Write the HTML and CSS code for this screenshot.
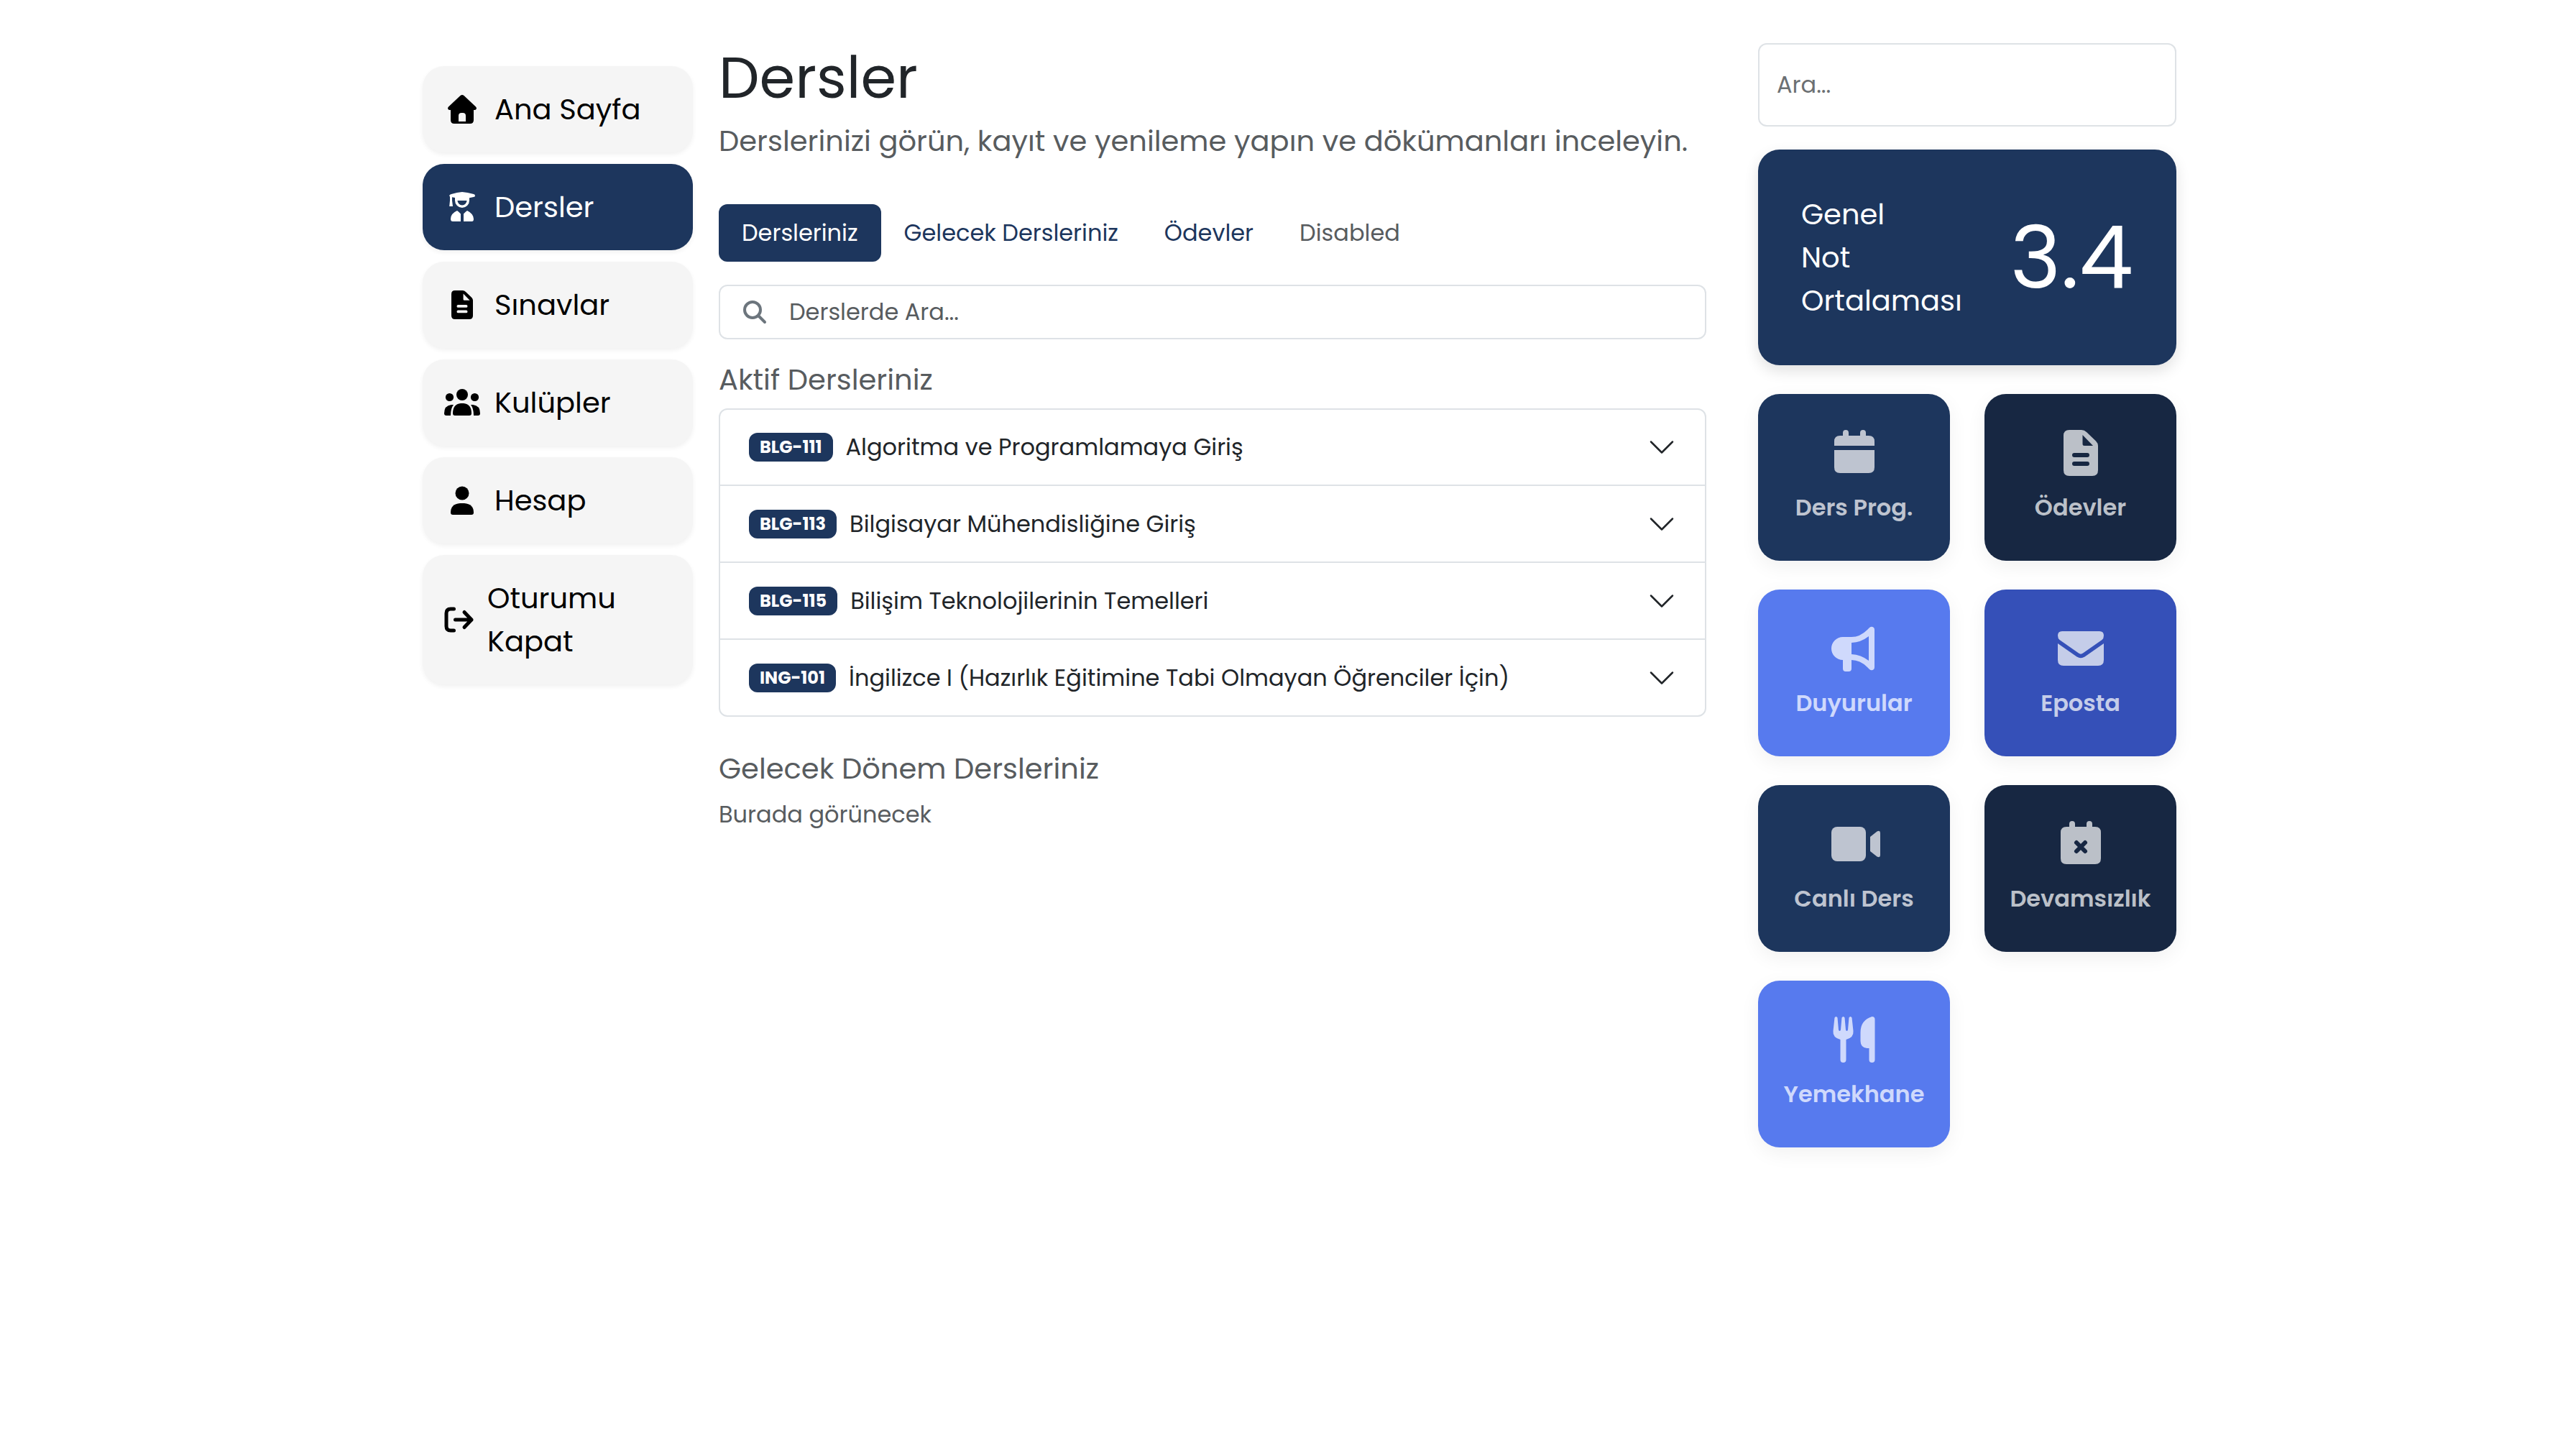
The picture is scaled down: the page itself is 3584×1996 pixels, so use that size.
FILE: index.html
```html
<!DOCTYPE html>
<html lang="tr">
<head>
<meta charset="utf-8">
<meta name="viewport" content="width=device-width, initial-scale=1">
<title>Dersler</title>
<link rel="stylesheet" href="styles.css">
</head>
<body>
<svg class="sprite" aria-hidden="true">
  <symbol id="i-file" viewBox="0 0 64 64"><path fill-rule="evenodd" d="M16 0H33Q37 0 40 3L53 15.500Q56 18.500 56 22V56Q56 64 48 64H16Q8 64 8 56V8Q8 0 16 0ZM34.500 7V19.500Q34.500 22 37 22H49ZM23 32a3 3 0 0 0 0 6H41a3 3 0 0 0 0-6ZM23 44a3 3 0 0 0 0 6H41a3 3 0 0 0 0-6Z"/></symbol>
</svg>
<div class="shell">
  <nav class="menu" aria-label="Menü">
    <a class="menu-item" href="#"><svg class="menu-icon" viewBox="-5 0 50 40"><path fill-rule="evenodd" d="M17.500 1Q20 -1 22.500 1L39 16.500Q40.500 18 39.800 19.500Q39 21 37 21H36V35Q36 40 31 40H9Q4 40 4 35V21H3Q1 21 .2 19.500Q-.5 18 1 16.500ZM15 37H25V29Q25 25 21 25H19Q15 25 15 29Z"/></svg><span>Ana Sayfa</span></a>
    <a class="menu-item active" href="#" aria-current="page"><svg class="menu-icon" viewBox="-5 0 50 40"><path fill-rule="evenodd" d="M20-1Q27-.5 36 2Q38 2.600 38 4.200Q38 5.700 36 6L30 7.200V11A10 10 0 0 1 10 11V7L6 6.300V11L7 19H2.200L3 11V5.500Q2 5 2.300 3.800Q2.600 2.600 5 2Q13-.5 20-1ZM13.500 11A6.500 6.500 0 0 0 26.500 11Z"/><path d="M13 25Q15 26 18 29.500V40H7Q4 40 4 36.500Q4 29 13 25ZM27 25Q25 26 22 29.500V40H33.500Q36 40 36 36.500Q35.500 29 27 25Z"/></svg><span>Dersler</span></a>
    <a class="menu-item" href="#"><svg class="menu-icon"><use href="#i-file"/></svg><span>Sınavlar</span></a>
    <a class="menu-item" href="#"><svg class="menu-icon" viewBox="0 0 50 40"><circle cx="25" cy="9" r="8"/><circle cx="7.500" cy="12.500" r="5.600"/><circle cx="42.500" cy="12.500" r="5.600"/><path d="M23 21H27Q38 22 38 35Q38 38 35 38H15Q12 38 12 35Q12 22 23 21ZM10 23H13Q9 28 9 38H3Q0 38 0 35Q0 24 10 23ZM40 23H37Q41 28 41 38H47Q50 38 50 35Q50 24 40 23Z"/></svg><span>Kulüpler</span></a>
    <a class="menu-item" href="#"><svg class="menu-icon" viewBox="-5 0 50 40"><circle cx="20" cy="10" r="9.500"/><path d="M17 24H23Q36 25 36 37Q36 40 33 40H7Q4 40 4 37Q4 25 17 24Z"/></svg><span>Hesap</span></a>
    <a class="menu-item" href="#"><svg class="menu-icon square" viewBox="0 0 40 40"><path class="line" d="M13.500 5H9Q3 5 3 11V29Q3 35 9 35H13.500M15.500 20H38M28 9.500L38 20L28 30.500"/></svg><span>Oturumu Kapat</span></a>
  </nav>

  <main class="content">
    <h1>Dersler</h1>
    <p class="lead">Derslerinizi görün, kayıt ve yenileme yapın ve dökümanları inceleyin.</p>
    <div class="tabs">
      <button class="tab active" type="button">Dersleriniz</button>
      <button class="tab" type="button">Gelecek Dersleriniz</button>
      <button class="tab" type="button">Ödevler</button>
      <button class="tab" type="button" disabled>Disabled</button>
    </div>
    <label class="search">
      <svg class="search-icon" viewBox="0 0 32 32"><path class="line" d="M24 13A11 11 0 1 1 2 13A11 11 0 1 1 24 13ZM21 21L30 30"/></svg>
      <input type="text" placeholder="Derslerde Ara..." aria-label="Derslerde Ara">
    </label>
    <h2>Aktif Dersleriniz</h2>
    <div class="accordion">
      <button class="course" type="button"><span class="badge">BLG-111</span><span class="name">Algoritma ve Programlamaya Giriş</span><svg class="chevron" viewBox="0 0 16 16"><path d="M2 5l6 6 6-6"/></svg></button>
      <button class="course" type="button"><span class="badge">BLG-113</span><span class="name">Bilgisayar Mühendisliğine Giriş</span><svg class="chevron" viewBox="0 0 16 16"><path d="M2 5l6 6 6-6"/></svg></button>
      <button class="course" type="button"><span class="badge">BLG-115</span><span class="name">Bilişim Teknolojilerinin Temelleri</span><svg class="chevron" viewBox="0 0 16 16"><path d="M2 5l6 6 6-6"/></svg></button>
      <button class="course" type="button"><span class="badge">ING-101</span><span class="name">İngilizce I (Hazırlık Eğitimine Tabi Olmayan Öğrenciler İçin)</span><svg class="chevron" viewBox="0 0 16 16"><path d="M2 5l6 6 6-6"/></svg></button>
    </div>
    <h2 class="next">Gelecek Dönem Dersleriniz</h2>
    <p class="note">Burada görünecek</p>
  </main>

  <aside class="side">
    <input class="side-search" type="text" placeholder="Ara..." aria-label="Ara">
    <section class="gpa"><span class="gpa-label">Genel<br>Not<br>Ortalaması</span><strong class="gpa-value">3.4</strong></section>
    <div class="tiles">
      <a class="tile navy" href="#"><svg class="tile-icon" viewBox="0 0 64 64"><path d="M20 0a4 4 0 0 1 4 4V8H40V4a4 4 0 0 1 8 0V8H52Q60 8 60 16V22H4V16Q4 8 12 8H16V4a4 4 0 0 1 4-4ZM4 28H60V52Q60 60 52 60H12Q4 60 4 52Z"/></svg><span>Ders Prog.</span></a>
      <a class="tile dark" href="#"><svg class="tile-icon"><use href="#i-file"/></svg><span>Ödevler</span></a>
      <a class="tile sky" href="#"><svg class="tile-icon" viewBox="0 0 64 64"><path fill-rule="evenodd" d="M16 16H28Q40 16 50 6L53 3Q56 .5 59 3Q60 4 60 6V58Q60 60 59 61Q56 63.500 53 61L50 58Q40 48 28 48V60Q28 64 24 64H20Q16 64 16 60V48A16 16 0 0 1 16 16ZM28 24V40Q41 40.500 52 49V15Q41 23.500 28 24Z"/></svg><span>Duyurular</span></a>
      <a class="tile royal" href="#"><svg class="tile-icon" viewBox="0 0 64 64"><path d="M6 8H58Q64 8 64 14Q64 18 61.500 20L35 38.500Q32 40.800 29 38.500L2.500 20Q0 18 0 14Q0 8 6 8ZM0 25L26.500 43.500Q32 47 37.500 43.500L64 25V48Q64 56 56 56H8Q0 56 0 48Z"/></svg><span>Eposta</span></a>
      <a class="tile navy" href="#"><svg class="tile-icon" viewBox="0 0 64 64"><rect y="8" width="48" height="48" rx="8"/><path d="M54 22L63.500 14.500Q68 12.500 68 16.500V47.500Q68 51.500 63.500 49.500L54 42Z"/></svg><span>Canlı Ders</span></a>
      <a class="tile dark" href="#"><svg class="tile-icon" viewBox="0 0 64 64"><path d="M20 0a4 4 0 0 1 4 4V8H40V4a4 4 0 0 1 8 0V8H52Q60 8 60 16V52Q60 60 52 60H12Q4 60 4 52V16Q4 8 12 8H16V4a4 4 0 0 1 4-4Z"/><path class="cross" d="M26 30L38 42M38 30L26 42"/></svg><span>Devamsızlık</span></a>
      <a class="tile sky" href="#"><svg class="tile-icon" viewBox="0 0 64 64"><path d="M4.500 1.500Q6.500-1.500 8.500 1.500L10 18.500Q11.500 21.500 13 18.500L14.500 1.500Q16.500-1.500 18.500 1.500L20 18.500Q21.500 21.500 23 18.500L24.500 1.500Q26.500-1.500 28.500 1.500L30.500 20Q31.500 29 20.500 32V60Q20.500 64 16.500 64Q12.500 64 12.500 60V32Q1.500 29 2.500 20ZM56.500 0Q60.500 0 60.500 4V60Q60.500 64 56.500 64Q52.500 64 52.500 60V44H49.500Q40.500 43 40.500 34V22Q40.500 5 56.500 0Z"/></svg><span>Yemekhane</span></a>
    </div>
  </aside>
</div>
</body>
</html>
```
FILE: styles.css
```css
* { box-sizing: border-box; }

body {
  margin: 0;
  background: #fff;
  color: #212529;
  font-family: Poppins, Inter, "Open Sans", sans-serif;
  font-size: 32px;
  line-height: 48px;
}

button, input { font: inherit; color: inherit; }
a { text-decoration: none; }
svg { fill: currentColor; flex: none; overflow: visible; }
.sprite { position: absolute; width: 0; height: 0; }
.line { fill: none; stroke: currentColor; stroke-width: 5; stroke-linecap: round; stroke-linejoin: round; }

.shell {
  display: grid;
  grid-template-columns: 376px minmax(0, 1fr) 582px;
  align-items: start;
  max-width: 2472px;
  margin: 0 auto;
  padding: 60px 0 60px 32px;
}

/* Left menu */
.menu { display: flex; flex-direction: column; gap: 16px; margin-top: 32px; }
.menu-item {
  display: flex;
  align-items: center;
  gap: 20px;
  padding: 30px;
  border-radius: 30px;
  background: #f5f5f5;
  color: #000;
  font-size: 40px;
  line-height: 60px;
  box-shadow: 0 3px 6px rgba(0, 0, 0, .06);
}
.menu-item.active { background: #1d365d; color: #fff; }
.menu-icon { width: 50px; height: 40px; }
.menu-icon.square { width: 40px; }

/* Course list */
.content { margin: 0 72px 0 36px; }
h1 { margin: 0 0 10px; font-size: 80px; line-height: 96px; font-weight: 400; }
.lead { margin: 0; color: #585c5f; font-size: 40px; line-height: 60px; }
.tabs { display: flex; margin: 58px 0 32px; }
.tab {
  padding: 16px 32px;
  border: 0;
  border-radius: 12px;
  background: none;
  color: #1d365d;
  white-space: nowrap;
}
.tab.active { background: #1d365d; color: #fff; }
.tab:disabled { color: #585c5f; }
.search {
  display: flex;
  align-items: center;
  gap: 32px;
  height: 76px;
  padding: 0 32px;
  border: 2px solid #dee2e6;
  border-radius: 12px;
}
.search-icon { width: 32px; height: 32px; color: #6c757d; }
.search-icon .line { stroke-width: 4; }
.search input { flex: 1; min-width: 0; padding: 0; border: 0; background: none; outline: 0; }
input::placeholder { color: #585c5f; opacity: 1; }
h2 { margin: 32px 0 16px; color: #585c5f; font-size: 40px; line-height: 48px; font-weight: 400; }
.accordion { border: 2px solid #dee2e6; border-radius: 12px; }
.course {
  display: flex;
  align-items: center;
  width: 100%;
  min-height: 104px;
  padding: 0 40px;
  border: 0;
  background: none;
  text-align: left;
}
.course + .course { min-height: 107px; border-top: 2px solid #dee2e6; }
.badge {
  padding: 8px 15px;
  border-radius: 12px;
  background: #1d365d;
  color: #fff;
  font-size: 24px;
  line-height: 24px;
  font-weight: 700;
}
.name { flex: 1; margin-left: 18px; }
.chevron { width: 40px; height: 40px; fill: none; stroke: currentColor; stroke-linecap: round; stroke-linejoin: round; }
.next { margin: 48px 0 16px; }
.note { margin: 0; color: #585c5f; }

/* Right column */
.side-search {
  display: block;
  width: 100%;
  height: 116px;
  padding: 0 24px;
  border: 2px solid #dee2e6;
  border-radius: 12px;
  background: #fff;
}
.side-search::placeholder { color: #6c7073; }
.gpa {
  display: flex;
  align-items: center;
  justify-content: space-between;
  margin: 32px 0 40px;
  padding: 60px;
  border-radius: 30px;
  background: #1d365d;
  color: #fff;
  box-shadow: 0 8px 20px rgba(0, 0, 0, .12);
}
.gpa-label { font-size: 40px; line-height: 60px; }
.gpa-value { font-size: 120px; line-height: 180px; font-weight: 400; }
.tiles { display: grid; grid-template-columns: 1fr 1fr; gap: 40px 48px; }
.tile {
  display: flex;
  flex-direction: column;
  align-items: center;
  gap: 20px;
  height: 232px;
  padding-top: 50px;
  border-radius: 30px;
  font-weight: 600;
  box-shadow: 0 8px 28px rgba(0, 0, 0, .06);
}
.tile-icon { width: 64px; height: 64px; }
.navy { background: #1d365d; color: #bec4d0; }
.dark { background: #172742; color: #bbc0c8; }
.sky { background: #577aee; color: #cfd9fc; }
.royal { background: #3550b8; color: #c5cde9; }
.cross { fill: none; stroke: #172742; stroke-width: 6; stroke-linecap: round; }
```
